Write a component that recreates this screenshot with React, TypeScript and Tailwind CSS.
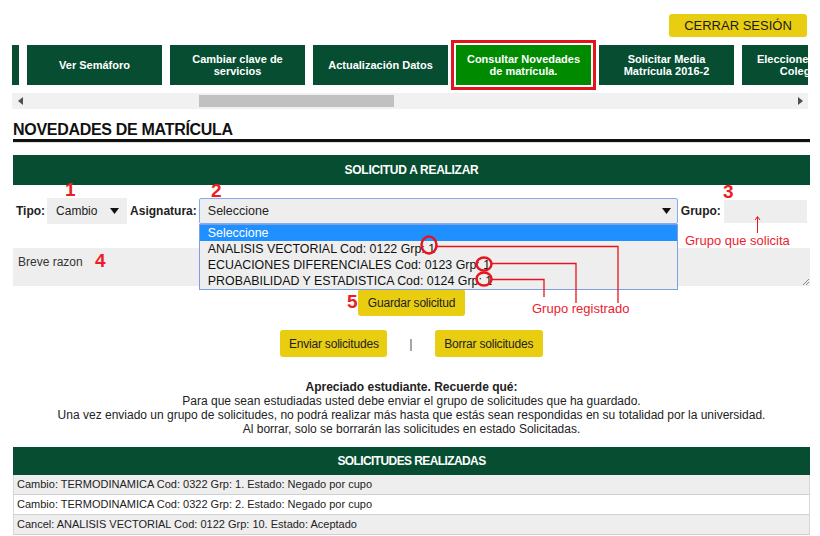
const tiles: string[][] = [
  [""],
  ["Ver Semáforo"],
  ["Cambiar clave de", "servicios"],
  ["Actualización Datos"],
  ["Consultar Novedades", "de matrícula."],
  ["Solicitar Media", "Matrícula 2016-2"],
  ["Elecciones Cuerpos", "Colegiados"],
];

const options = [
  "ANALISIS VECTORIAL Cod: 0122 Grp: 1",
  "ECUACIONES DIFERENCIALES Cod: 0123 Grp: 1",
  "PROBABILIDAD Y ESTADISTICA Cod: 0124 Grp: 1",
];

const realizadas = [
  "Cambio: TERMODINAMICA Cod: 0322 Grp: 1. Estado: Negado por cupo",
  "Cambio: TERMODINAMICA Cod: 0322 Grp: 2. Estado: Negado por cupo",
  "Cancel: ANALISIS VECTORIAL Cod: 0122 Grp: 10. Estado: Aceptado",
];

const Arrow = ({ dir }: { dir: "left" | "right" | "down" }) => {
  if (dir === "down")
    return (
      <svg width="9" height="6" viewBox="0 0 9 6">
        <path d="M0 0h9L4.5 6z" fill="#111" />
      </svg>
    );
  return (
    <svg width="5" height="8" viewBox="0 0 5 8">
      <path d={dir === "left" ? "M5 0v8L0 4z" : "M0 0v8l5-4z"} fill="#505050" />
    </svg>
  );
};

const YellowBtn = ({ children, w }: { children: React.ReactNode; w: string }) => (
  <button className={`${w} h-[27px] bg-[#e9cd10] rounded-[3px] text-[12px] text-[#222] tracking-[-0.2px]`}>
    {children}
  </button>
);

export default function App() {
  return (
    <div className="relative w-[820px] h-[536px] overflow-hidden bg-white font-['Liberation_Sans',Arial,sans-serif] text-[#222]">
      {/* top bar */}
      <div className="flex justify-end pt-[14px] pr-[13px]">
        <button className="w-[138px] h-[23px] bg-[#e9cd10] rounded-[3px] text-[13px] text-[#1a1a1a]">
          CERRAR SESIÓN
        </button>
      </div>

      {/* nav tiles */}
      <div className="mx-[12px] mt-[3px] h-[50px] overflow-hidden flex items-center gap-[8px]">
        {tiles.map((t, i) => {
          const active = i === 4;
          return (
            <div
              key={i}
              className={`${i === 0 ? "ml-[-128px]" : ""} ${
                active ? "bg-[#008a00] outline-[3px] outline-solid outline-offset-2 outline-[#e3141b]" : "bg-[#074d31]"
              } w-[135px] h-[40px] shrink-0 flex flex-col items-center justify-center text-white font-bold text-[11px] leading-[12px] text-center whitespace-nowrap`}
            >
              {t.map((l, j) => (
                <span key={j}>{l}</span>
              ))}
            </div>
          );
        })}
      </div>

      {/* scrollbar */}
      <div className="mx-[12px] mt-[3px] h-[16px] bg-[#f1f1f1] flex items-center">
        <div className="w-[16px] flex justify-center">
          <Arrow dir="left" />
        </div>
        <div className="flex-1 h-full flex items-center">
          <div className="ml-[171px] w-[195px] h-[12px] bg-[#c1c1c1]" />
        </div>
        <div className="w-[16px] flex justify-center">
          <Arrow dir="right" />
        </div>
      </div>

      <div className="mx-[13px] w-[797px]">
        {/* title */}
        <div className="mt-[11px] border-b-[3px] border-[#111]">
          <h1 className="text-[16px] leading-[19px] font-bold text-[#111] tracking-[-0.3px]">NOVEDADES DE MATRÍCULA</h1>
        </div>
        <div className="h-px bg-[#ddd]" />

        {/* solicitud header */}
        <div className="mt-[12px] h-[30px] bg-[#074d31] flex items-center justify-center text-white font-bold text-[12px] tracking-[-0.3px]">
          SOLICITUD A REALIZAR
        </div>

        {/* form row */}
        <div className="mt-[13px] flex items-center h-[26px] text-[12px]">
          <span className="ml-[3px] font-bold">Tipo:</span>
          <div className="ml-[2px] w-[80px] h-[26px] bg-[#eeeeee] flex items-center justify-between pl-[9px] pr-[8px] text-[12px]">
            <span>Cambio</span>
            <Arrow dir="down" />
          </div>
          <span className="ml-[3px] font-bold">Asignatura:</span>
          <div className="relative ml-[2px] w-[479px] h-[26px]">
            <div className="h-full bg-[#eeeeee] border border-[#86abe8] rounded-[2px] flex items-center justify-between pl-[8px] pr-[6px] text-[12.5px]">
              <span>Seleccione</span>
              <Arrow dir="down" />
            </div>
            <div className="absolute left-0 top-[26px] w-[479px] bg-[#eeeeee] border border-[#7d9ee0] text-[12.4px] leading-[16px] z-10">
              <div className="bg-[#1e90ff] text-white pl-[8px]">Seleccione</div>
              {options.map((o) => (
                <div key={o} className="pl-[8px] text-[#111]">
                  {o}
                </div>
              ))}
            </div>
          </div>
          <span className="ml-[3px] font-bold">Grupo:</span>
          <div className="ml-[3px] w-[83px] h-[23px] bg-[#eeeeee]" />
        </div>

        {/* textarea */}
        <div className="relative mt-[24px] h-[38px] bg-[#eeeeee] pl-[5px] pt-[5px] text-[12px] text-[#333]">
          Breve razon
          <svg className="absolute right-[1px] bottom-[1px]" width="7" height="7" viewBox="0 0 7 7">
            <path d="M7 1L1 7M7 4L4 7" stroke="#888" strokeWidth="1" />
          </svg>
        </div>

        {/* guardar */}
        <div className="mt-[3px] flex justify-center">
          <YellowBtn w="w-[107px]">Guardar solicitud</YellowBtn>
        </div>

        {/* enviar / borrar */}
        <div className="mt-[14px] flex justify-center items-center">
          <YellowBtn w="w-[107px]">Enviar solicitudes</YellowBtn>
          <span className="mx-[22px] text-[13px] text-[#666]">|</span>
          <YellowBtn w="w-[108px]">Borrar solicitudes</YellowBtn>
        </div>

        {/* info */}
        <div className="mt-[23px] text-center text-[12px] leading-[14px] text-[#222]">
          <p className="font-bold">Apreciado estudiante. Recuerde qué:</p>
          <p>Para que sean estudiadas usted debe enviar el grupo de solicitudes que ha guardado.</p>
          <p>
            Una vez enviado un grupo de solicitudes, no podrá realizar más hasta que estás sean respondidas en su
            totalidad por la universidad.
          </p>
          <p>Al borrar, solo se borrarán las solicitudes en estado Solicitadas.</p>
        </div>

        {/* realizadas */}
        <div className="mt-[11px] h-[28px] bg-[#074d31] flex items-center justify-center text-white font-bold text-[12px] tracking-[-0.6px]">
          SOLICITUDES REALIZADAS
        </div>
        <div className="border-x border-[#d6d6d6] text-[11px] text-[#222]">
          {realizadas.map((r, i) => (
            <div
              key={i}
              className={`h-[20px] flex items-center pl-[3px] border-b border-[#d0d0d0] ${i % 2 === 0 ? "bg-[#eeeeee]" : "bg-white"}`}
            >
              {r}
            </div>
          ))}
        </div>
      </div>

      {/* annotations */}
      <svg className="absolute inset-0 pointer-events-none z-20" width="820" height="536" viewBox="0 0 820 536">
        <g fill="none" stroke="#e8141f">
          <ellipse cx="429" cy="245" rx="7.5" ry="8.5" strokeWidth="2.5" />
          <ellipse cx="484" cy="264" rx="7.5" ry="6.5" strokeWidth="2.5" />
          <ellipse cx="484" cy="279" rx="7.5" ry="6.5" strokeWidth="2.5" />
          <path d="M437 246.5H618V303" strokeWidth="1.3" />
          <path d="M492 263.5H576V303" strokeWidth="1.3" />
          <path d="M492 279.5H544V297" strokeWidth="1.3" />
          <path d="M757.5 233V217" strokeWidth="1" />
          <path d="M755 220l2.5-3.5 2.5 3.5" strokeWidth="1" />
        </g>
      </svg>
      <div className="absolute inset-0 pointer-events-none z-30 text-[#ee1c24] font-bold text-[19px] leading-none">
        <span className="absolute left-[65px] top-[180px]">1</span>
        <span className="absolute left-[211px] top-[181px]">2</span>
        <span className="absolute left-[723px] top-[182px]">3</span>
        <span className="absolute left-[95px] top-[251px]">4</span>
        <span className="absolute left-[347px] top-[292px]">5</span>
        <span className="absolute left-[685px] top-[234px] text-[13px] font-normal text-[#ec1c2e]">Grupo que solicita</span>
        <span className="absolute left-[532px] top-[302px] text-[13px] font-normal text-[#ec1c2e]">Grupo registrado</span>
      </div>
    </div>
  );
}
